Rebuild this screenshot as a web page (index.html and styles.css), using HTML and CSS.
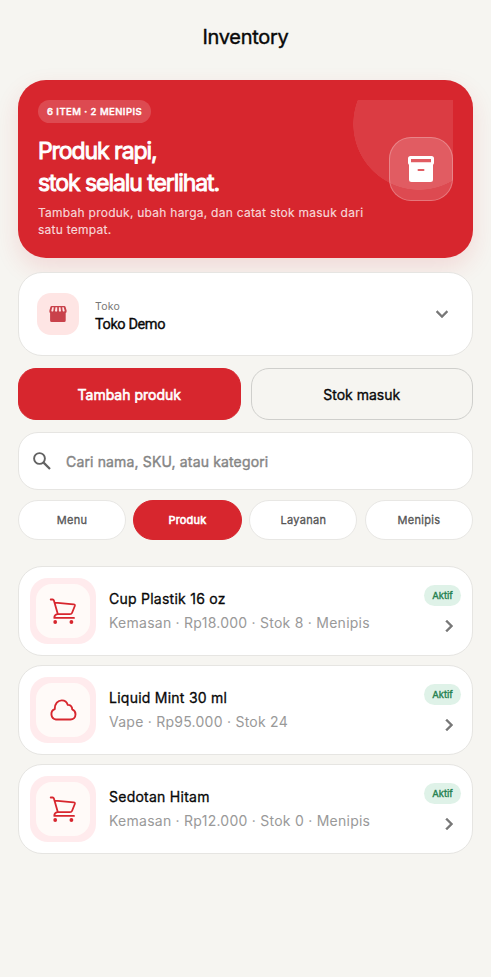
FILE: index.html
```html
<!DOCTYPE html>
<html lang="id">
<head>
<meta charset="utf-8">
<title>Inventory</title>
<link rel="stylesheet" href="styles.css">
</head>
<body>
<svg class="defs" aria-hidden="true">
  <symbol id="cart" viewBox="0 0 28 28">
    <path d="M1.700 2.500H3.600Q4.600 2.500 4.900 3.500L8.800 17M6 5.600L24.600 7.300Q26.300 7.500 25.800 9L23 16Q22.500 17.200 21 17.200H8.500Q5.300 17.600 5.300 20.900H25" fill="none" stroke="currentColor" stroke-width="1.800" stroke-linecap="round" stroke-linejoin="round"/>
    <circle cx="6.200" cy="25" r="1.900" fill="currentColor"/><circle cx="22.400" cy="25" r="1.900" fill="currentColor"/>
  </symbol>
  <symbol id="cloud" viewBox="0 0 28 28">
    <path d="M7 23.500A5.400 5.400 0 0 1 5.700 13.200C5.600 7.500 9 4.400 12.800 4.400C16 4.400 18 6.200 18.800 8.900C21.500 8.800 23.300 10.600 23.200 13.400C25.500 14.300 26.500 16.200 26.500 18.200C26.500 21.300 24.300 23.500 21.500 23.500Z" fill="none" stroke="currentColor" stroke-width="1.900" stroke-linejoin="round"/>
  </symbol>
  <symbol id="chevron" viewBox="0 0 24 24">
    <path d="M8.600 16.600L13.200 12 8.600 7.400 10 6l6 6-6 6z" fill="currentColor" stroke="currentColor" stroke-width=".4"/>
  </symbol>
</svg>
<header class="topbar"><h1>Inventory</h1></header>
<main>
  <section class="hero">
    <div class="copy">
      <span class="pill">6 ITEM · 2 MENIPIS</span>
      <h2>Produk rapi,<br>stok selalu terlihat.</h2>
      <p>Tambah produk, ubah harga, dan catat stok masuk dari satu tempat.</p>
    </div>
    <div class="art">
      <div class="box">
        <svg viewBox="0 0 26 26" width="26" height="26"><path fill="#fff" fill-rule="evenodd" d="M2.500 0H23.500Q26 0 26 2.500V6.500Q26 8.400 25 8.800V23.500Q25 26 22.500 26H3.500Q1 26 1 23.500V8.800Q0 8.400 0 6.500V2.500Q0 0 2.500 0ZM3 3V6.300H23V3ZM10.500 13Q9.500 13 9.500 14T10.500 15H15.500Q16.500 15 16.500 14T15.500 13Z"/></svg>
      </div>
    </div>
  </section>

  <section class="store">
    <div class="store-icon">
      <svg viewBox="0 0 18 16" width="18" height="16"><path fill="#c9424b" d="M2.600 0H15.400Q16.300 0 16.600 1L17.600 4.500Q17.900 6.500 16.700 7.100V14.500Q16.700 16 15.200 16H2.600Q1.100 16 1.100 14.500V7.100Q.1 6.500.4 4.500L1.400 1Q1.700 0 2.600 0Z"/><path fill="#fee5e4" d="M3.200 1.300H4.800L4.300 5Q3.600 6.200 2.300 5ZM6.500 1.300H8.200V5Q7.100 6.400 6 5ZM9.900 1.300H11.500L12 5Q11 6.400 9.900 5ZM13.200 1.300H14.700L15.700 5Q14.500 6.200 13.700 5Z"/></svg>
    </div>
    <div class="store-text"><small>Toko</small><strong>Toko Demo</strong></div>
    <svg class="down" viewBox="0 0 24 24"><use href="#chevron"/></svg>
  </section>

  <div class="actions">
    <button class="btn primary"><span>Tambah produk</span></button>
    <button class="btn"><span>Stok masuk</span></button>
  </div>

  <div class="search">
    <svg viewBox="0 0 18 18" width="18" height="18"><circle cx="6.500" cy="6.500" r="5.400" fill="none" stroke="#626262" stroke-width="1.900"/><path d="M10.600 10.600L17 17" stroke="#626262" stroke-width="2.200"/></svg>
    <span>Cari nama, SKU, atau kategori</span>
  </div>

  <nav class="chips">
    <span class="chip">Menu</span><span class="chip on">Produk</span><span class="chip">Layanan</span><span class="chip">Menipis</span>
  </nav>

  <section class="list">
    <article class="item">
      <div class="thumb"><div><svg width="28" height="28"><use href="#cart"/></svg></div></div>
      <div class="info"><h3>Cup Plastik 16 oz</h3><p>Kemasan · Rp18.000 · Stok 8 · Menipis</p></div>
      <div class="side"><span class="badge">Aktif</span><svg width="24" height="24"><use href="#chevron"/></svg></div>
    </article>
    <article class="item">
      <div class="thumb"><div><svg width="28" height="28"><use href="#cloud"/></svg></div></div>
      <div class="info"><h3>Liquid Mint 30 ml</h3><p>Vape · Rp95.000 · Stok 24</p></div>
      <div class="side"><span class="badge">Aktif</span><svg width="24" height="24"><use href="#chevron"/></svg></div>
    </article>
    <article class="item">
      <div class="thumb"><div><svg width="28" height="28"><use href="#cart"/></svg></div></div>
      <div class="info"><h3>Sedotan Hitam</h3><p>Kemasan · Rp12.000 · Stok 0 · Menipis</p></div>
      <div class="side"><span class="badge">Aktif</span><svg width="24" height="24"><use href="#chevron"/></svg></div>
    </article>
  </section>
</main>
</body>
</html>
```
FILE: styles.css
```css
* { box-sizing: border-box; margin: 0; padding: 0; }
body { background: #f6f5f1; color: #080808; font-family: Inter, sans-serif; min-height: 977px; }
.defs { position: absolute; width: 0; height: 0; }
svg { display: block; flex: none; }
.topbar { height: 80px; padding-top: 22px; text-align: center; }
.topbar h1 { font-size: 20px; line-height: 30px; font-weight: 400; letter-spacing: -.3px; -webkit-text-stroke: .4px; }
main { padding: 0 18px; }

.hero { height: 178px; padding: 20px; border-radius: 28px; background: #d7262e; color: #fff; display: flex; justify-content: space-between; box-shadow: 0 10px 24px rgba(215, 38, 46, .13); }
.copy { width: 336px; flex: none; }
.pill { display: flex; align-items: center; justify-content: center; width: 113px; height: 23px; border-radius: 12px; background: rgba(255, 255, 255, .17); font-size: 9.500px; font-weight: 500; letter-spacing: .45px; white-space: nowrap; -webkit-text-stroke: .4px; }
.hero h2 { margin-top: 12px; font-size: 23px; line-height: 32px; font-weight: 400; letter-spacing: -1.070px; white-space: nowrap; -webkit-text-stroke: .9px; }
.hero p { margin-top: 5px; font-size: 12px; line-height: 17px; letter-spacing: .25px; color: rgba(255, 255, 255, .8); font-weight: 400; -webkit-text-stroke: .15px; }
.art { width: 100px; flex: none; height: 101px; margin-left: -21px; display: flex; align-items: flex-end; justify-content: flex-end; background: radial-gradient(circle 66px at 66px 24px, rgba(255, 255, 255, .1) 65.5px, transparent 66px); }
.box { width: 64px; height: 64px; border-radius: 22px; border: 1px solid rgba(255, 255, 255, .25); background: rgba(255, 255, 255, .17); display: flex; align-items: center; justify-content: center; }

.store { margin-top: 14px; height: 84px; padding: 0 18px; border: 1px solid #e6e5e2; border-radius: 24px; background: #fff; display: flex; align-items: center; }
.store-icon { width: 42px; height: 42px; border-radius: 14px; background: #fee5e4; display: flex; align-items: center; justify-content: center; }
.store-text { margin-left: 16px; flex: 1; display: flex; flex-direction: column; padding-top: 5px; }
.store small { font-size: 10.500px; line-height: 16px; color: #777; letter-spacing: .25px; }
.store strong { font-family: Roboto, Inter, sans-serif; font-size: 14.500px; line-height: 20px; font-weight: 400; letter-spacing: -.4px; -webkit-text-stroke: .35px; }
.down { width: 24px; height: 24px; color: #777; transform: rotate(90deg); }

.actions { margin-top: 12px; display: grid; grid-template-columns: 1fr 1fr; gap: 10px; }
.btn { height: 52px; padding-top: 2px; border: 1px solid #cfcfcc; border-radius: 18px; background: transparent; font: 400 14px/20px Inter, sans-serif; color: #080808; letter-spacing: 0; -webkit-text-stroke: .35px; }
.btn.primary { background: #d7262e; border-color: #d7262e; color: #fff; letter-spacing: 0; -webkit-text-stroke: .6px; }

.search { margin-top: 12px; height: 58px; padding: 0 14px; border: 1px solid #e6e5e2; border-radius: 20px; background: #fff; display: flex; align-items: center; gap: 15px; color: #858585; font-size: 14px; font-weight: 400; letter-spacing: .15px; -webkit-text-stroke: .4px; }

.chips { margin-top: 10px; display: grid; grid-template-columns: repeat(4, 1fr); gap: 7.500px; }
.chip { height: 40px; border: 1px solid #e8e7e4; border-radius: 20px; background: #fff; color: #555; display: flex; align-items: center; justify-content: center; font-size: 11px; font-weight: 400; letter-spacing: .3px; -webkit-text-stroke: .3px; }
.chip.on { background: #d7262e; border-color: #d7262e; color: #fff; letter-spacing: .2px; -webkit-text-stroke: .6px; margin-left: -.5px; }

.list { margin-top: 26px; display: grid; gap: 9px; }
.item { height: 90px; padding: 0 11px; border: 1px solid #e6e5e2; border-radius: 24px; background: #fff; display: flex; align-items: center; }
.thumb { width: 66px; height: 66px; border-radius: 18px; background: #ffebed; display: flex; align-items: center; justify-content: center; color: #d7262e; }
.thumb div { width: 54px; height: 54px; border-radius: 16px; background: #fffaf8; display: flex; align-items: center; justify-content: center; }
.info { margin-left: 13px; flex: 1; white-space: nowrap; }
.info h3 { font-size: 14px; line-height: 24px; font-weight: 400; letter-spacing: .25px; -webkit-text-stroke: .3px; }
.info p { font-size: 14px; line-height: 24px; color: #999; letter-spacing: .25px; }
.side { display: flex; flex-direction: column; align-items: flex-end; color: #777; }
.badge { width: 37px; height: 21px; border-radius: 10.500px; background: #dff2e8; color: #23804e; font-size: 9.500px; font-weight: 400; -webkit-text-stroke: .35px; display: flex; align-items: center; justify-content: center; margin-bottom: 8px; }
```
